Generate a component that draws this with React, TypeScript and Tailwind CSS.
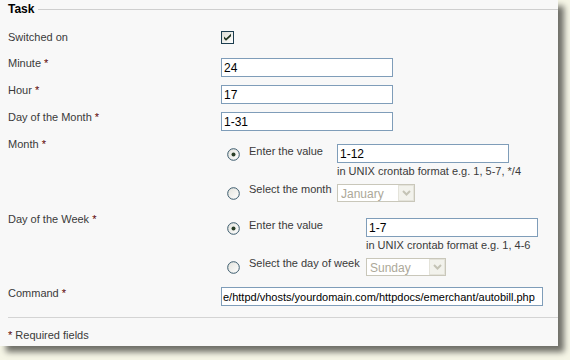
import React from "react";

const Req = () => <span className="text-[#5a0000]"> *</span>;

function Checkbox() {
  return (
    <div className="w-[13px] h-[13px] border border-[#1c3d4f] bg-gradient-to-br from-[#dcdcd4] to-white flex items-center justify-center">
      <svg width="9" height="9" viewBox="0 0 9 9">
        <path d="M1 3.5 L3 5.5 L8 0.8 L8 3.2 L3 7.8 L1 5.8 Z" fill="#21341f" />
      </svg>
    </div>
  );
}

function Radio({ checked }: { checked?: boolean }) {
  return (
    <svg width="13" height="13" viewBox="0 0 13 13">
      <defs>
        <linearGradient id={checked ? "rg1" : "rg2"} x1="0" y1="0" x2="1" y2="1">
          <stop offset="0" stopColor="#e2e2dc" />
          <stop offset="1" stopColor="#ffffff" />
        </linearGradient>
      </defs>
      <circle cx="6.5" cy="6.5" r="5.8" fill={`url(#${checked ? "rg1" : "rg2"})`} stroke="#3a5a6c" strokeWidth="1" />
      {checked && <circle cx="6.5" cy="6.5" r="2" fill="#2a3f27" />}
    </svg>
  );
}

function TextInput({ value, w, size = "text-[12px] px-[2px]" }: { value: string; w: string; size?: string }) {
  return (
    <input
      readOnly
      value={value}
      className={`${w} h-[19px] border border-[#7f9db9] bg-white ${size} text-black outline-none font-['Liberation_Sans',Arial,sans-serif]`}
    />
  );
}

function DisabledSelect({ value, w }: { value: string; w: string }) {
  return (
    <div className={`relative ${w} h-[18px]`}>
      <select
        disabled
        value={value}
        className="appearance-none w-full h-full border border-[#c9c7ba] bg-white pl-[3px] text-[12px] text-[#aca899] font-['Liberation_Sans',Arial,sans-serif]"
      >
        <option>{value}</option>
      </select>
      <div className="absolute right-[1px] top-[1px] bottom-[1px] w-[16px] bg-[#f2f2ec] border border-[#e4e3da] flex items-center justify-center">
        <svg width="9" height="6" viewBox="0 0 9 6">
          <path d="M1 1 L4.5 4.5 L8 1" fill="none" stroke="#c4c3b5" strokeWidth="2" />
        </svg>
      </div>
    </div>
  );
}

function Row({ label, children, h }: { label: React.ReactNode; children: React.ReactNode; h: string }) {
  return (
    <div className={`flex ${h}`}>
      <div className="w-[221px] pl-2 leading-[14px]">{label}</div>
      <div className="flex-1">{children}</div>
    </div>
  );
}

function RadioChoice({
  labelW,
  selectLabel,
  enter,
  hint,
  select,
}: {
  labelW: string;
  selectLabel: string;
  enter: React.ReactNode;
  hint: string;
  select: React.ReactNode;
}) {
  return (
    <div className="flex flex-col">
      <div className="flex">
        <div className="w-[28px] pl-[6px] pt-[4px]">
          <Radio checked />
        </div>
        <div className={`${labelW} leading-[14px]`}>Enter the value</div>
        <div className="flex flex-col">
          {enter}
          <div className="mt-[1px] leading-[14px]">{hint}</div>
        </div>
      </div>
      <div className="flex mt-[4px]">
        <div className="w-[28px] pl-[6px] pt-[5px]">
          <Radio />
        </div>
        <div className={`${labelW} leading-[14px]`}>{selectLabel}</div>
        <div className="pt-[2px]">{select}</div>
      </div>
    </div>
  );
}

export default function App() {
  return (
    <div className="w-[570px] h-[360px] bg-[#f5f5e6] overflow-hidden font-['Liberation_Sans',Arial,sans-serif] text-[11px] text-[#3a3a3a]">
      <div className="w-[558px] h-[346px] bg-[#f8f8f8] shadow-[6px_6px_6px_rgba(0,0,0,0.55)] flex flex-col">
        {/* Legend */}
        <div className="flex items-center h-[18px]">
          <span className="pl-2 pr-1 text-[12px] font-bold text-black leading-[14px]">Task</span>
          <div className="flex-1 border-t border-[#cfcfcf]" />
        </div>

        <div className="mt-[12px]">
          <Row label="Switched on" h="h-[26px]">
            <div className="mt-[1px]">
              <Checkbox />
            </div>
          </Row>
          <Row label={<>Minute<Req /></>} h="h-[27px]">
            <div className="mt-[2px]">
              <TextInput value="24" w="w-[172px]" />
            </div>
          </Row>
          <Row label={<>Hour<Req /></>} h="h-[27px]">
            <div className="mt-[2px]">
              <TextInput value="17" w="w-[172px]" />
            </div>
          </Row>
          <Row label={<>Day of the Month<Req /></>} h="h-[27px]">
            <div className="mt-[2px]">
              <TextInput value="1-31" w="w-[172px]" />
            </div>
          </Row>
          <Row label={<>Month<Req /></>} h="h-[75px]">
            <div className="pt-[7px]">
              <RadioChoice
                labelW="w-[88px]"
                selectLabel="Select the month"
                enter={<TextInput value="1-12" w="w-[172px]" />}
                hint="in UNIX crontab format e.g. 1, 5-7, */4"
                select={<DisabledSelect value="January" w="w-[78px]" />}
              />
            </div>
          </Row>
          <Row label={<>Day of the Week<Req /></>} h="h-[74px]">
            <div className="pt-[6px]">
              <RadioChoice
                labelW="w-[117px]"
                selectLabel="Select the day of week"
                enter={<TextInput value="1-7" w="w-[172px]" />}
                hint="in UNIX crontab format e.g. 1, 4-6"
                select={<DisabledSelect value="Sunday" w="w-[80px]" />}
              />
            </div>
          </Row>
          <Row label={<>Command<Req /></>} h="h-[31px]">
            <div className="mt-[1px]">
              <TextInput
                value="e/httpd/vhosts/yourdomain.com/httpdocs/emerchant/autobill.php"
                w="w-[322px]"
                size="text-[11px] px-[1px]"
              />
            </div>
          </Row>
        </div>

        <div className="ml-2 border-t border-[#d4d4d4]" />
        <div className="pl-2 mt-[10px] leading-[14px]">
          <span className="text-[#5a0000]">*</span> Required fields
        </div>
      </div>
    </div>
  );
}
